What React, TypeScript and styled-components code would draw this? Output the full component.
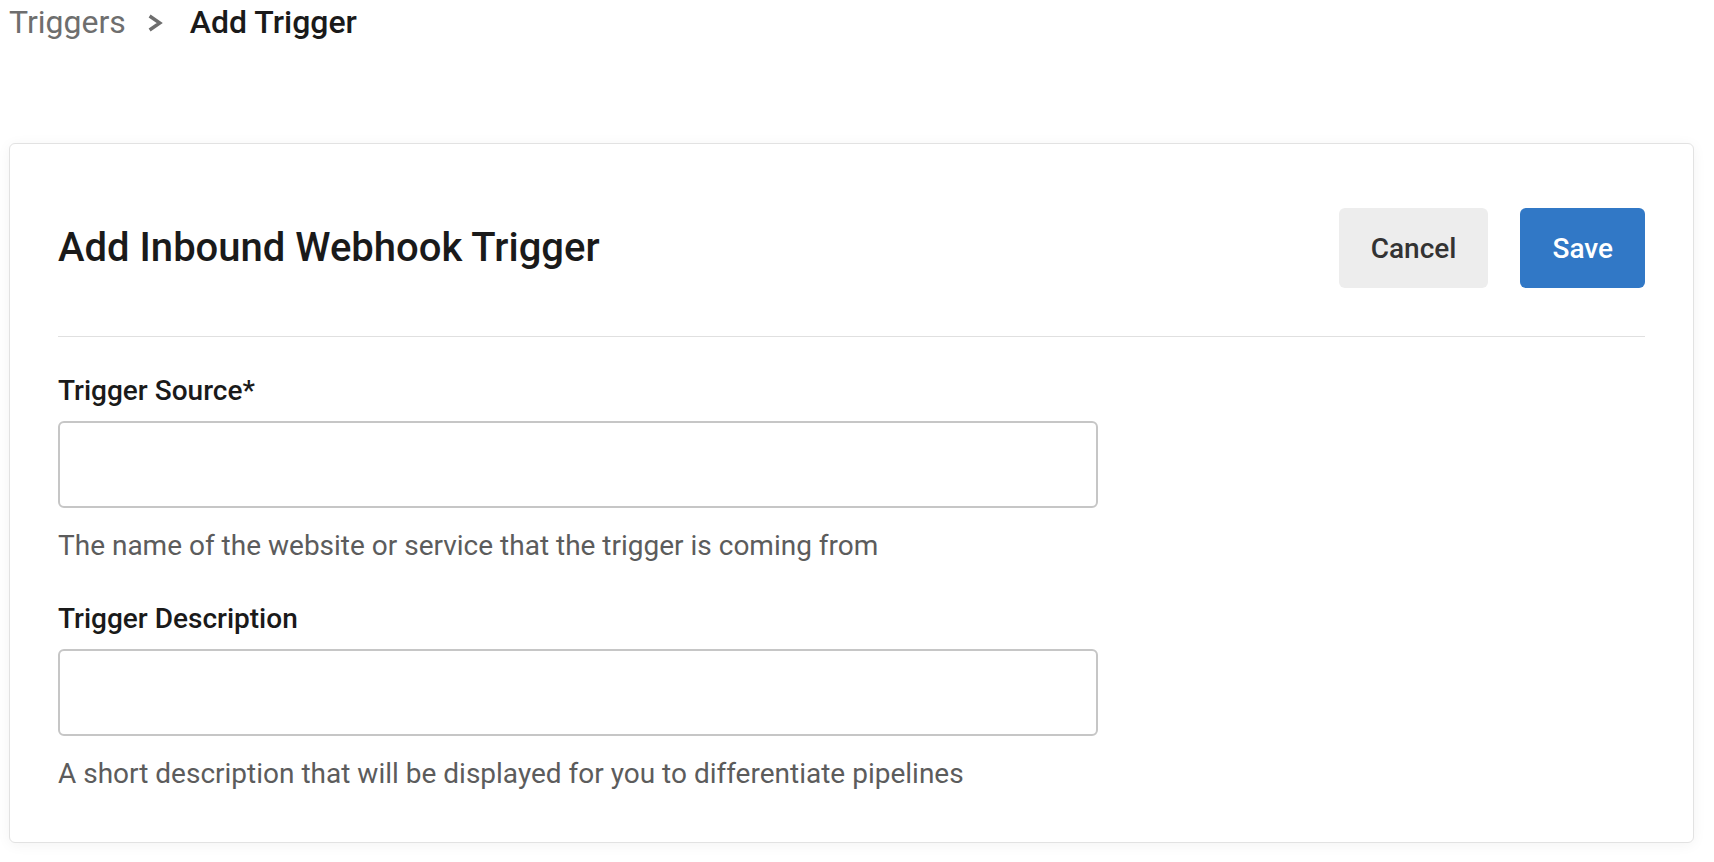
import React from "react";
import styled, { createGlobalStyle } from "styled-components";

const GlobalStyle = createGlobalStyle`
  html, body {
    margin: 0;
    padding: 0;
    background: #ffffff;
  }
  body {
    font-family: Roboto, "Noto Sans", "Liberation Sans", sans-serif;
    color: #1a1a1a;
  }
  * { box-sizing: border-box; }
`;

const Page = styled.div`
  padding: 3px 20px 20px 9px;
`;

const Breadcrumb = styled.nav`
  display: flex;
  align-items: center;
  font-size: 32px;
  line-height: 38px;
  height: 38px;
`;

const CrumbLink = styled.span`
  color: #6e6e6e;
  font-weight: 400;
`;

const CrumbCurrent = styled.span`
  color: #1a1a1a;
  font-weight: 500;
`;

const Chevron = styled.svg`
  display: block;
  width: 16px;
  height: 18px;
  margin: 2px 27px 0 21px;
`;

const Card = styled.section`
  margin-top: 102px;
  background: #ffffff;
  border: 1px solid #e2e2e2;
  border-radius: 6px;
  box-shadow: 0 2px 14px rgba(0, 0, 0, 0.05);
  padding: 0 48px 50px;
`;

const Header = styled.header`
  display: flex;
  align-items: center;
  justify-content: space-between;
  padding: 64px 0 48px;
  border-bottom: 1px solid #e0e0e0;
`;

const Title = styled.h1`
  margin: 0;
  font-size: 40px;
  line-height: 48px;
  font-weight: 500;
  color: #1a1a1a;
`;

const Actions = styled.div`
  display: flex;
  gap: 32px;
`;

const Button = styled.button<{ $primary?: boolean }>`
  height: 80px;
  padding: 0 32px;
  border: none;
  border-radius: 6px;
  font-family: inherit;
  font-size: 28px;
  font-weight: 500;
  cursor: pointer;
  background: ${(p) => (p.$primary ? "#3178c6" : "#ededed")};
  color: ${(p) => (p.$primary ? "#ffffff" : "#333333")};
`;

const Form = styled.div`
  display: flex;
  flex-direction: column;
  gap: 37px;
  padding-top: 36px;
`;

const Field = styled.div`
  display: flex;
  flex-direction: column;
`;

const Label = styled.label`
  font-size: 28px;
  line-height: 36px;
  font-weight: 500;
  color: #1a1a1a;
`;

const Input = styled.input`
  margin-top: 12px;
  width: 1040px;
  height: 87px;
  border: 2px solid #c6c6c6;
  border-radius: 6px;
  background: #ffffff;
  padding: 0 20px;
  font-family: inherit;
  font-size: 28px;
  outline: none;
`;

const Helper = styled.div`
  margin-top: 20px;
  font-size: 28px;
  line-height: 36px;
  font-weight: 400;
  color: #5c5c5c;
`;

const fields = [
  {
    id: "source",
    label: "Trigger Source*",
    helper: "The name of the website or service that the trigger is coming from",
  },
  {
    id: "description",
    label: "Trigger Description",
    helper: "A short description that will be displayed for you to differentiate pipelines",
  },
];

export default function App() {
  return (
    <>
      <GlobalStyle />
      <Page>
        <Breadcrumb>
          <CrumbLink>Triggers</CrumbLink>
          <Chevron viewBox="0 0 16 18" aria-hidden="true">
            <polyline
              points="2.6,2 12.8,9 2.6,16"
              fill="none"
              stroke="#6e6e6e"
              strokeWidth="3.4"
              strokeLinejoin="miter"
              strokeMiterlimit="2"
            />
          </Chevron>
          <CrumbCurrent>Add Trigger</CrumbCurrent>
        </Breadcrumb>
        <Card>
          <Header>
            <Title>Add Inbound Webhook Trigger</Title>
            <Actions>
              <Button>Cancel</Button>
              <Button $primary>Save</Button>
            </Actions>
          </Header>
          <Form>
            {fields.map((f) => (
              <Field key={f.id}>
                <Label htmlFor={f.id}>{f.label}</Label>
                <Input id={f.id} type="text" />
                <Helper>{f.helper}</Helper>
              </Field>
            ))}
          </Form>
        </Card>
      </Page>
    </>
  );
}
